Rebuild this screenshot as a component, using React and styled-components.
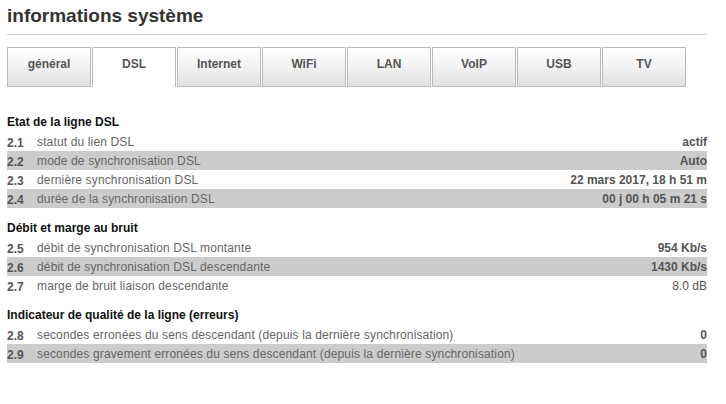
import React from 'react'
import styled, { createGlobalStyle } from 'styled-components'

const GlobalStyle = createGlobalStyle`
  body {
    margin: 0;
    background: #fff;
    font-family: "Liberation Sans", Arial, sans-serif;
  }
`

const tabs = ['général', 'DSL', 'Internet', 'WiFi', 'LAN', 'VoIP', 'USB', 'TV']

const sections = [
  {
    title: 'Etat de la ligne DSL',
    rows: [
      ['2.1', 'statut du lien DSL', 'actif'],
      ['2.2', 'mode de synchronisation DSL', 'Auto'],
      ['2.3', 'dernière synchronisation DSL', '22 mars 2017, 18 h 51 m'],
      ['2.4', 'durée de la synchronisation DSL', '00 j 00 h 05 m 21 s'],
    ],
  },
  {
    title: 'Débit et marge au bruit',
    rows: [
      ['2.5', 'débit de synchronisation DSL montante', '954 Kb/s'],
      ['2.6', 'débit de synchronisation DSL descendante', '1430 Kb/s'],
      ['2.7', 'marge de bruit liaison descendante', '8.0 dB', true],
    ],
  },
  {
    title: 'Indicateur de qualité de la ligne (erreurs)',
    rows: [
      ['2.8', 'secondes erronées du sens descendant (depuis la dernière synchronisation)', '0'],
      ['2.9', 'secondes gravement erronées du sens descendant (depuis la dernière synchronisation)', '0'],
    ],
  },
]

function App() {
  return (
    <Wrapper>
      <GlobalStyle />
      <Title>informations système</Title>
      <TabBar>
        {tabs.map((t) => (
          <Tab key={t} $active={t === 'DSL'}>{t}</Tab>
        ))}
      </TabBar>
      <Content>
        {sections.map((s) => (
          <Section key={s.title}>
            <Heading>{s.title}</Heading>
            {s.rows.map(([num, label, value, light], i) => (
              <Row key={num} $striped={i % 2 === 1}>
                <Num>{num}</Num>
                <Label>{label}</Label>
                <Value $light={light}>{value}</Value>
              </Row>
            ))}
          </Section>
        ))}
      </Content>
    </Wrapper>
  )
}

const Wrapper = styled.div`
  width: 700px;
  margin-left: 7px;
`

const Title = styled.h1`
  margin: 0;
  padding-top: 3px;
  height: 31px;
  font-size: 19px;
  line-height: 26px;
  font-weight: bold;
  color: #333;
  border-bottom: 1px solid #d0d0d0;
`

const TabBar = styled.div`
  display: flex;
  gap: 1px;
  margin-top: 12px;
`

const Tab = styled.div`
  box-sizing: border-box;
  width: 84px;
  height: 40px;
  padding-top: 9px;
  text-align: center;
  font-size: 12px;
  font-weight: bold;
  line-height: 14px;
  color: #555;
  border: 1px solid #bbb;
  background: ${({ $active }) =>
    $active ? '#fff' : 'linear-gradient(to bottom, #ffffff 0%, #f2f2f2 50%, #e0e0e0 100%)'};
  border-bottom: ${({ $active }) => ($active ? 'none' : '1px solid #bbb')};
`

const Content = styled.div`
  padding-top: 15px;
`

const Section = styled.div`
  margin-top: 10px;
`

const Heading = styled.div`
  height: 20px;
  line-height: 20px;
  font-size: 12px;
  font-weight: bold;
  color: #111;
`

const Row = styled.div`
  display: flex;
  align-items: center;
  height: 19px;
  font-size: 12px;
  background: ${({ $striped }) => ($striped ? '#cccccc' : 'transparent')};
`

const Num = styled.span`
  width: 30px;
  flex-shrink: 0;
  font-weight: bold;
  color: #555;
  padding-top: 2px;
`

const Label = styled.span`
  flex: 1;
  color: #666;
  letter-spacing: 0.14px;
`

const Value = styled.span`
  font-weight: ${({ $light }) => ($light ? 'normal' : 'bold')};
  color: #555;
  text-align: right;
`

export default App
